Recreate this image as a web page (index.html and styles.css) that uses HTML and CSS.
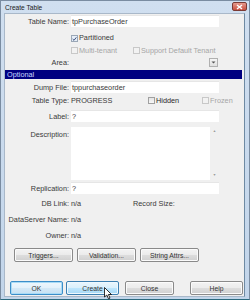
FILE: index.html
```html
<!DOCTYPE html>
<html>
<head>
<meta charset="utf-8">
<link rel="stylesheet" href="styles.css">
</head>
<body>
<div class="window">
  <div class="titlebar">
    <span class="title">Create Table</span>
    <span class="close"><svg width="7" height="6" viewBox="0 0 7 6"><path d="M1 1L6 5M6 1L1 5" stroke="#fff" stroke-width="1.5"/></svg></span>
  </div>
  <div class="client">
    <div class="form top">
      <div class="lbl">Table Name:</div>
      <div class="field"><div class="input">tpPurchaseOrder</div></div>

      <div class="lbl"></div>
      <div class="field low"><span class="cb checked"><svg width="6" height="6" viewBox="0 0 6 6"><path d="M0.8 3L2.4 4.6L5.2 1" stroke="#3a4f7a" stroke-width="1.2" fill="none"/></svg></span><span>Partitioned</span></div>

      <div class="lbl"></div>
      <div class="field dis"><span class="cb"></span><span class="w54">Multi-tenant</span><span class="cb"></span><span>Support Default Tenant</span></div>

      <div class="lbl">Area:</div>
      <div class="field"><span class="spacer"></span><span class="drop"><svg width="5" height="3" viewBox="0 0 5 3"><path d="M0.5 0.5L2.5 2.5L4.5 0.5Z" fill="#555"/></svg></span></div>
    </div>

    <div class="section">Optional</div>

    <div class="form opt">
      <div class="lbl">Dump File:</div>
      <div class="field"><div class="input">tppurchaseorder</div></div>

      <div class="lbl">Table Type:</div>
      <div class="field"><span class="w77">PROGRESS</span><span class="cb"></span><span class="w46">Hidden</span><span class="dis row"><span class="cb"></span><span>Frozen</span></span></div>

      <div class="lbl">Label:</div>
      <div class="field"><div class="input">?</div></div>

      <div class="lbl ltop">Description:</div>
      <div class="field fend"><div class="textarea"><div class="sb"><span class="arr">&#9650;</span><span class="arr">&#9660;</span></div></div></div>

      <div class="lbl">Replication:</div>
      <div class="field"><div class="input">?</div></div>

      <div class="lbl">DB Link:</div>
      <div class="field"><span class="w62">n/a</span><span>Record Size:</span></div>

      <div class="lbl">DataServer Name:</div>
      <div class="field"><span>n/a</span></div>

      <div class="lbl">Owner:</div>
      <div class="field"><span>n/a</span></div>
    </div>

    <div class="btnrow mid">
      <span class="btn">Triggers...</span>
      <span class="btn">Validation...</span>
      <span class="btn">String Attrs...</span>
    </div>

    <div class="btnrow bottom">
      <span class="btn focus">OK</span>
      <span class="btn hover">Create</span>
      <span class="btn close-btn">Close</span>
      <span class="btn help">Help</span>
    </div>
    <svg class="cursor" width="9" height="13" viewBox="0 0 9 13"><path d="M0.5 0.5V10L2.8 8L4.5 11.8L6 11.1L4.4 7.5H7.5Z" fill="#fff" stroke="#000" stroke-width="0.8"/></svg>
  </div>
</div>
</body>
</html>
```
FILE: styles.css
```css
* { box-sizing: border-box; }
html, body { margin: 0; padding: 0; }
body {
  width: 250px;
  height: 300px;
  overflow: hidden;
  font-family: "Liberation Sans", Arial, sans-serif;
  font-size: 7.3px;
  color: #3a3a3a;
  background: #c5d7ec;
}
.window {
  width: 250px;
  height: 300px;
  border: 1px solid #7a8ca1;
  border-bottom-color: #2c6a7e;
  background: linear-gradient(#d0dff0, #c2d5ea);
  display: flex;
  flex-direction: column;
  padding: 0 4px 2px 3px;
}
.titlebar {
  height: 12px;
  flex: none;
  display: flex;
  align-items: center;
  justify-content: space-between;
  padding-left: 1px;
}
.title { font-size: 6.6px; color: #1a1a1a; }
.close {
  width: 15px;
  height: 9px;
  margin-top: -1px;
  margin-right: -2px;
  border: 1px solid #7b3a34;
  border-radius: 2px;
  background: linear-gradient(#e69a8e, #c9503f);
  display: flex;
  align-items: center;
  justify-content: center;
}
.client {
  flex: 1;
  position: relative;
  background: #f0f0f0;
  border: 1px solid #a9b8c9;
  border-right-color: #6e8aa3;
  display: flex;
  flex-direction: column;
}
.form {
  display: grid;
  grid-template-columns: 64px 148px;
  column-gap: 2px;
  align-items: center;
}
.form.top { grid-template-rows: 12px 17px 12px 13px; margin-top: 1px; }
.lbl { text-align: right; white-space: nowrap; }
.ltop { align-self: start; padding-top: 6px; }
.field { display: flex; align-items: center; height: 100%; white-space: nowrap; }
.field.low { align-items: flex-end; padding-bottom: 2px; }
.field.fend { align-items: flex-end; }
.field > * { flex: none; }
.input {
  width: 148px;
  height: 12px;
  background: #fff;
  border-top: 1px solid #e6e6e6;
  padding: 1px 1px 0 1px;
  line-height: 10px;
}
.cb {
  width: 7px;
  height: 7px;
  border: 1px solid #a0a0a0;
  background: linear-gradient(#e4e4e4, #f8f8f8);
  margin-right: 1px;
  display: inline-flex;
  align-items: center;
  justify-content: center;
  flex: none;
}
.cb.checked { background: #e6eef8; border-color: #9aa7b6; }
.dis { color: #a6a6a6; }
.dis .cb { border-color: #c8c8c8; background: #f2f2f2; }
.row { display: flex; align-items: center; }
.w54 { width: 54px; }
.w62 { width: 62px; }
.w77 { width: 77px; }
.w46 { width: 46px; color: #2a2a2a; }
.spacer { flex: 1 !important; }
.drop {
  width: 9px;
  height: 9px;
  margin-right: 1px;
  border: 1px solid #b0b0b0;
  background: linear-gradient(#f6f6f6, #e0e0e0);
  display: flex;
  align-items: center;
  justify-content: center;
}
.section {
  height: 9px;
  margin: 1px 2px 2px 0;
  background: #000080;
  color: #c9d7ff;
  line-height: 9px;
  padding-left: 2px;
}
.form.opt {
  grid-template-rows: 12px 15px 16px 56px 16px 15px 16px 17px;
}
.textarea {
  width: 148px;
  height: 53px;
  background: #fff;
  display: flex;
  justify-content: flex-end;
}
.sb {
  width: 9px;
  height: 100%;
  background: #f0f0f0;
  display: flex;
  flex-direction: column;
  justify-content: space-between;
  align-items: center;
  padding: 2px 0;
}
.arr { font-size: 3.5px; color: #9a9a9a; line-height: 5px; }
.btnrow { display: flex; }
.btnrow.mid { margin-top: 4px; padding-left: 9px; gap: 4px; }
.btnrow.bottom { margin-top: 19px; padding-left: 5px; gap: 3px; }
.btn {
  height: 14px;
  width: 59px;
  border: 1px solid #8a8a8a;
  border-radius: 2px;
  background: linear-gradient(#f3f3f3 0%, #ebebeb 50%, #dddddd 51%, #d0d0d0 100%);
  box-shadow: inset 0 0 0 1px #fbfbfb;
  display: flex;
  align-items: center;
  justify-content: center;
  font-size: 6.8px;
  color: #333;
}
.btnrow.bottom .btn { width: 53px; }
.btn.focus {
  border-color: #3c8ec9;
  box-shadow: inset 0 0 0 1px #a9dbf6;
  background: linear-gradient(#eef7fd 0%, #e3f1fb 50%, #d4e9f7 51%, #c6e1f3 100%);
}
.btn.hover {
  border-color: #3c7fb1;
  box-shadow: inset 0 0 0 1px #eef8fe;
  background: linear-gradient(#eaf6fd 0%, #d9f0fc 50%, #bee6fd 51%, #a7d9f5 100%);
}
.btnrow.bottom .btn.close-btn { margin-left: 3px; width: 49px; }
.btn.help { margin-left: 13px; }
.cursor { position: absolute; left: 99px; top: 273px; }
```
